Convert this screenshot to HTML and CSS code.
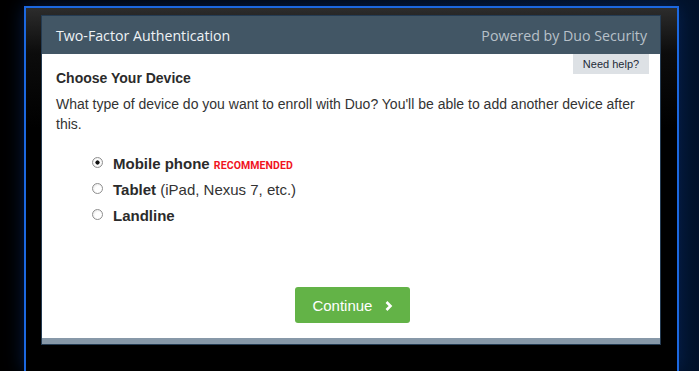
FILE: index.html
```html
<!DOCTYPE html>
<html>
<head>
    <title>Two-Factor Authentication</title>
    <link rel="stylesheet" href="styles.css">
</head>
<body>
    <div class="frame">
        <div class="panel">
            <div class="panel-head">
                <span class="title">Two-Factor Authentication</span>
                <span class="powered">Powered by Duo Security</span>
            </div>

            <div class="panel-body">
                <a class="help" href="#">Need help?</a>
                <h2>Choose Your Device</h2>
                <p>What type of device do you want to enroll with Duo? You'll be able to add another device after this.</p>

                <form class="device-form">
                    <label class="option">
                        <input type="radio" name="device" value="phone" checked>
                        <span><b>Mobile phone</b> <em class="tag">RECOMMENDED</em></span>
                    </label>
                    <label class="option">
                        <input type="radio" name="device" value="tablet">
                        <span><b>Tablet</b> (iPad, Nexus 7, etc.)</span>
                    </label>
                    <label class="option">
                        <input type="radio" name="device" value="landline">
                        <span><b>Landline</b></span>
                    </label>

                    <div class="actions">
                        <button type="submit">
                            Continue
                            <svg width="8" height="10" viewBox="0 0 8 10">
                                <path d="M1.5 1 L5.5 5 L1.5 9" fill="none" stroke="#fff" stroke-width="2.6"/>
                            </svg>
                        </button>
                    </div>
                </form>
            </div>
            <div class="panel-foot"></div>
        </div>
    </div>
</body>
</html>
```

FILE: styles.css
```css
html, body {
    margin: 0;
    height: 371px;
    overflow: hidden;
}

body {
    background: linear-gradient(90deg, #000 0%, #02122a 100%);
    font-family: Arial, "Liberation Sans", sans-serif;
    color: #333;
}

.frame {
    box-sizing: border-box;
    width: 655px;
    height: 365px;
    margin: 6px 0 0 24px;
    padding: 7px 0 0 15px;
    border: 2px solid #1c68e0;
    border-bottom: none;
    background: linear-gradient(#2c2c2c, #0c0c0c 45px, #000 120px);
    box-shadow: 0 0 18px rgba(10, 50, 120, 0.55);
}

.panel {
    box-sizing: border-box;
    width: 620px;
    border: 1px solid #243b52;
    background: #fff;
}

.panel-head {
    height: 38px;
    display: flex;
    justify-content: space-between;
    align-items: center;
    padding: 0 13px 0 14px;
    background-color: #425665;
    font-family: "Open Sans", sans-serif;
    font-size: 14.2px;
}

.title {
    color: #eef2f5;
}

.powered {
    color: #b8c1c9;
}

.panel-body {
    display: flow-root;
    padding: 0 11px 15px 14px;
}

.help {
    float: right;
    width: 76px;
    height: 20px;
    line-height: 20px;
    text-align: center;
    background-color: #dde1e5;
    color: #1f2b38;
    font-size: 11px;
    text-decoration: none;
}

h2 {
    margin: 14px 0 0;
    font-size: 14px;
    line-height: 20px;
    color: #2b2b2b;
}

p {
    margin: 6px 0 0;
    font-size: 14px;
    line-height: 20px;
    color: #333;
}

.device-form {
    margin-top: 16px;
}

.option {
    display: flex;
    align-items: center;
    height: 26px;
    padding-left: 36px;
    font-size: 15px;
    color: #333;
}

.option b {
    color: #2b2b2b;
}

.option input {
    appearance: none;
    -webkit-appearance: none;
    box-sizing: border-box;
    width: 11px;
    height: 11px;
    margin: 0 10px 2px 0;
    border: 1px solid #8f8f8f;
    border-radius: 50%;
    background: radial-gradient(circle at 60% 60%, #fff 40%, #dcdcdc 100%);
}

.option input:checked {
    background: radial-gradient(circle, #111 0, #111 1.8px, #fff 2.4px, #e4e4e4 100%);
}

.tag {
    font-family: Roboto, sans-serif;
    font-style: normal;
    font-weight: 700;
    font-size: 10.5px;
    color: #f0141e;
    letter-spacing: 0.1px;
}

.actions {
    margin-top: 59px;
    text-align: center;
}

button {
    width: 115px;
    height: 36px;
    border: none;
    border-radius: 3px;
    background-color: #63b347;
    color: #fff;
    font-family: Arial, "Liberation Sans", sans-serif;
    font-size: 15px;
    cursor: pointer;
}

button svg {
    margin-left: 8px;
}

.panel-foot {
    height: 6px;
    background-color: #8798a8;
}
```
